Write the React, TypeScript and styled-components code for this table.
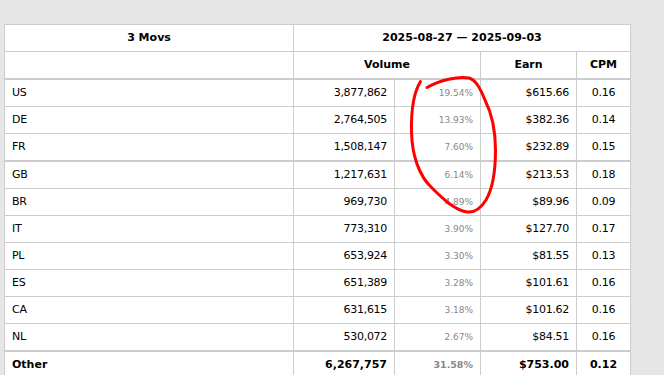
import React from 'react'
import styled, { createGlobalStyle } from 'styled-components'

type Row = {
  country: string
  volume: string
  share: string
  earn: string
  cpm: string
  thick?: boolean
}

const rows: Row[] = [
  { country: 'US', volume: '3,877,862', share: '19.54%', earn: '$615.66', cpm: '0.16' },
  { country: 'DE', volume: '2,764,505', share: '13.93%', earn: '$382.36', cpm: '0.14' },
  { country: 'FR', volume: '1,508,147', share: '7.60%', earn: '$232.89', cpm: '0.15', thick: true },
  { country: 'GB', volume: '1,217,631', share: '6.14%', earn: '$213.53', cpm: '0.18' },
  { country: 'BR', volume: '969,730', share: '4.89%', earn: '$89.96', cpm: '0.09' },
  { country: 'IT', volume: '773,310', share: '3.90%', earn: '$127.70', cpm: '0.17' },
  { country: 'PL', volume: '653,924', share: '3.30%', earn: '$81.55', cpm: '0.13' },
  { country: 'ES', volume: '651,389', share: '3.28%', earn: '$101.61', cpm: '0.16' },
  { country: 'CA', volume: '631,615', share: '3.18%', earn: '$101.62', cpm: '0.16' },
  { country: 'NL', volume: '530,072', share: '2.67%', earn: '$84.51', cpm: '0.16', thick: true },
]

const App = () => {
  return (
    <Page>
      <GlobalStyle />
      <Stats>
        <colgroup>
          <col style={{ width: 289 }} />
          <col style={{ width: 101 }} />
          <col style={{ width: 86 }} />
          <col style={{ width: 96 }} />
          <col style={{ width: 54 }} />
        </colgroup>
        <thead>
          <HeadRow>
            <HeadCell>3 Movs</HeadCell>
            <HeadCell colSpan={4}>2025-08-27 — 2025-09-03</HeadCell>
          </HeadRow>
          <HeadRow $thick>
            <HeadCell></HeadCell>
            <HeadCell colSpan={2}>Volume</HeadCell>
            <HeadCell>Earn</HeadCell>
            <HeadCell>CPM</HeadCell>
          </HeadRow>
        </thead>
        <tbody>
          {rows.map((r) => (
            <BodyRow key={r.country} $thick={r.thick}>
              <Cell $align="left">{r.country}</Cell>
              <Cell $align="right">{r.volume}</Cell>
              <Share>{r.share}</Share>
              <Cell $align="right">{r.earn}</Cell>
              <Cell $align="center">{r.cpm}</Cell>
            </BodyRow>
          ))}
          <BodyRow>
            <Cell $align="left" $bold>Other</Cell>
            <Cell $align="right" $bold>6,267,757</Cell>
            <Share $bold>31.58%</Share>
            <Cell $align="right" $bold>$753.00</Cell>
            <Cell $align="center" $bold>0.12</Cell>
          </BodyRow>
        </tbody>
      </Stats>

      {/* hand drawn marker around the share column */}
      <Marker width="664" height="375" viewBox="0 0 664 375">
        <path
          d="M 420.5 81.5
             C 414 92, 411 110, 411.5 132
             C 412 155, 419 176, 432 188
             C 444 200, 455 210, 467 212
             C 475 213, 481 208, 486 200
             C 493 188, 495.5 170, 495.5 150
             C 495.5 128, 491 112, 485 100
             C 480 88, 476 80, 469 78
             C 458 76, 440 80, 427 87.5"
          fill="none"
          stroke="#f00"
          strokeWidth="3"
          strokeLinecap="round"
          strokeLinejoin="round"
        />
      </Marker>
    </Page>
  )
}

export default App

const GlobalStyle = createGlobalStyle`
  html, body {
    margin: 0;
    padding: 0;
    background: #e6e6e6;
    overflow: hidden;
  }
`

const Page = styled.div`
  position: relative;
  width: 664px;
  height: 375px;
  padding: 24px 0 0 4px;
  box-sizing: border-box;
  font-family: "DejaVu Sans", Verdana, sans-serif;
  color: #000;
`

const Stats = styled.table`
  width: 627px;
  table-layout: fixed;
  border-collapse: separate;
  border-spacing: 0;
  background: #fff;
  border-top: 1px solid #cccccc;
  border-left: 1px solid #cccccc;
`

const HeadRow = styled.tr<{ $thick?: boolean }>`
  & > th {
    border-bottom-width: ${(p) => (p.$thick ? '2px' : '1px')};
  }
`

const BodyRow = styled.tr<{ $thick?: boolean }>`
  & > td {
    border-bottom-width: ${(p) => (p.$thick ? '2px' : '1px')};
  }
`

const HeadCell = styled.th`
  padding: 0 7px;
  height: 26px;
  line-height: 26px;
  font-size: 11px;
  font-weight: bold;
  text-align: center;
  border-right: 1px solid #cccccc;
  border-bottom: 1px solid #cccccc;
  white-space: nowrap;
`

const Cell = styled.td<{ $align: 'left' | 'right' | 'center'; $bold?: boolean }>`
  padding: 0 7px;
  height: 26px;
  line-height: 26px;
  font-size: 11px;
  letter-spacing: ${(p) => (p.$bold ? '0' : '-0.3px')};
  font-weight: ${(p) => (p.$bold ? 'bold' : 'normal')};
  text-align: ${(p) => p.$align};
  border-right: 1px solid #cccccc;
  border-bottom: 1px solid #cccccc;
  white-space: nowrap;
`

const Share = styled.td<{ $bold?: boolean }>`
  padding: 0 7px;
  height: 26px;
  line-height: 26px;
  font-size: ${(p) => (p.$bold ? '9.5px' : '9px')};
  font-weight: ${(p) => (p.$bold ? 'bold' : 'normal')};
  color: #888;
  text-align: right;
  border-right: 1px solid #cccccc;
  border-bottom: 1px solid #cccccc;
  white-space: nowrap;
`

const Marker = styled.svg`
  position: absolute;
  left: 0;
  top: 0;
  pointer-events: none;
`
